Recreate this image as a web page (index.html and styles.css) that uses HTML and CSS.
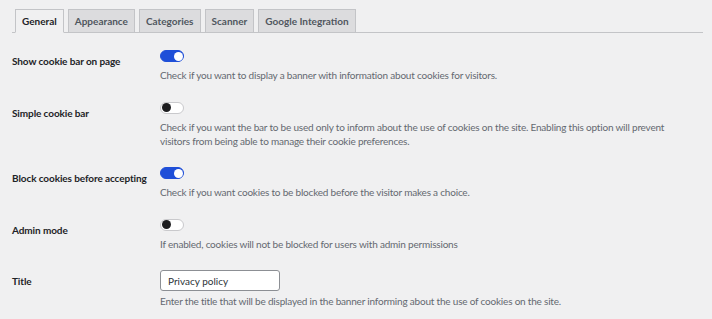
FILE: index.html
```html
<!DOCTYPE html>
<html lang="en">
<head>
<meta charset="utf-8">
<title>Cookie settings</title>
<link rel="stylesheet" href="styles.css">
</head>
<body>
<div class="wrap">
  <nav class="tabs">
    <a class="tab active">General</a>
    <a class="tab">Appearance</a>
    <a class="tab">Categories</a>
    <a class="tab">Scanner</a>
    <a class="tab">Google Integration</a>
  </nav>
  <div class="form">
    <div class="row">
      <div class="label">Show cookie bar on page</div>
      <div class="field">
        <span class="toggle on"></span>
        <p class="desc">Check if you want to display a banner with information about cookies for visitors.</p>
      </div>
    </div>
    <div class="row">
      <div class="label">Simple cookie bar</div>
      <div class="field">
        <span class="toggle"></span>
        <p class="desc">Check if you want the bar to be used only to inform about the use of cookies on the site. Enabling this option will prevent visitors from being able to manage their cookie preferences.</p>
      </div>
    </div>
    <div class="row">
      <div class="label">Block cookies before accepting</div>
      <div class="field">
        <span class="toggle on"></span>
        <p class="desc">Check if you want cookies to be blocked before the visitor makes a choice.</p>
      </div>
    </div>
    <div class="row">
      <div class="label">Admin mode</div>
      <div class="field">
        <span class="toggle"></span>
        <p class="desc">If enabled, cookies will not be blocked for users with admin permissions</p>
      </div>
    </div>
    <div class="row">
      <div class="label">Title</div>
      <div class="field">
        <input class="text" type="text" value="Privacy policy">
        <p class="desc desc-input">Enter the title that will be displayed in the banner informing about the use of cookies on the site.</p>
      </div>
    </div>
  </div>
</div>
</body>
</html>
```

FILE: styles.css
```css
html, body {
  margin: 0;
  padding: 0;
  background: #f0f0f1;
}
body {
  font-family: "Lato", "Noto Sans", sans-serif;
  font-size: 10px;
  line-height: 14px;
  color: #1d2327;
}
.wrap {
  padding: 9px 9px 0 12px;
}
.tabs {
  display: flex;
  gap: 4px;
  padding-left: 3px;
  border-bottom: 1px solid #c3c4c7;
}
.tab {
  display: block;
  padding: 5px 6px 4px;
  margin-bottom: -1px;
  border: 1px solid #c3c4c7;
  background: #dcdcde;
  color: #50575e;
  font-weight: 700;
  line-height: 13px;
}
.tab.active {
  background: #f0f0f1;
  border-bottom-color: #f0f0f1;
  color: #1d2327;
}
.form {
  padding-top: 17px;
}
.row {
  display: grid;
  grid-template-columns: 148px 1fr;
  margin-bottom: 19.5px;
}
.label {
  font-weight: 700;
  padding-top: 4px;
  white-space: nowrap;
  letter-spacing: -0.1px;
}
.field {
  padding-right: 10px;
}
.toggle {
  display: block;
  position: relative;
  box-sizing: border-box;
  width: 24px;
  height: 12px;
  border-radius: 6px;
  background: #fff;
  border: 1px solid #c9c9cc;
}
.toggle::after {
  content: "";
  position: absolute;
  top: 0.5px;
  left: 0.5px;
  width: 9px;
  height: 9px;
  border-radius: 50%;
  background: #1d1d1f;
}
.toggle.on {
  background: #1f4fd8;
  border-color: #1f4fd8;
}
.toggle.on::after {
  left: auto;
  right: 0.5px;
  background: #fff;
}
.desc {
  margin: 6px 0 0;
  color: #646970;
  letter-spacing: -0.2px;
}
.text {
  display: block;
  box-sizing: border-box;
  width: 120px;
  height: 21px;
  margin: 0;
  padding: 0 7px;
  border: 1px solid #8c8f94;
  border-radius: 3px;
  background: #fff;
  font-family: inherit;
  font-size: 10px;
  color: #2c3338;
}
.desc-input {
  margin-top: 3px;
}
```
